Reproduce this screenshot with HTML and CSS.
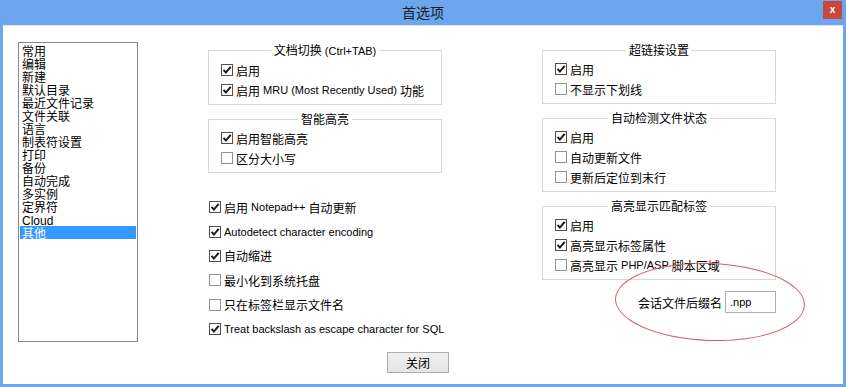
FILE: index.html
```html
<!DOCTYPE html>
<html lang="zh-CN">
<head>
    <meta charset="UTF-8">
    <meta name="viewport" content="width=device-width, initial-scale=1.0">
    <title>首选项</title>
    <link rel="stylesheet" href="styles.css">
</head>
<body>
    <div class="window">
        <div class="titlebar">
            <span></span>
            <span class="title">首选项</span>
            <button class="close" type="button">x</button>
        </div>

        <div class="content">
            <div class="main">
                <ul class="cat-list">
                    <li>常用</li>
                    <li>编辑</li>
                    <li>新建</li>
                    <li>默认目录</li>
                    <li>最近文件记录</li>
                    <li>文件关联</li>
                    <li>语言</li>
                    <li>制表符设置</li>
                    <li>打印</li>
                    <li>备份</li>
                    <li>自动完成</li>
                    <li>多实例</li>
                    <li>定界符</li>
                    <li><span class="en">Cloud</span></li>
                    <li class="selected">其他</li>
                </ul>

                <div class="column">
                    <div class="group">
                        <div class="group-title">文档切换<span class="en"> (Ctrl+TAB)</span></div>
                        <label class="check"><span class="box on"><svg viewBox="0 0 9 9"><path d="M1.4 4.4 3.5 6.8 7.8 1.6"/></svg></span>启用</label>
                        <label class="check"><span class="box on"><svg viewBox="0 0 9 9"><path d="M1.4 4.4 3.5 6.8 7.8 1.6"/></svg></span>启用<span class="en">&nbsp;MRU (Most Recently Used)&nbsp;</span>功能</label>
                    </div>
                    <div class="group">
                        <div class="group-title">智能高亮</div>
                        <label class="check"><span class="box on"><svg viewBox="0 0 9 9"><path d="M1.4 4.4 3.5 6.8 7.8 1.6"/></svg></span>启用智能高亮</label>
                        <label class="check"><span class="box"></span>区分大小写</label>
                    </div>

                    <div class="options">
                        <label class="check"><span class="box on"><svg viewBox="0 0 9 9"><path d="M1.4 4.4 3.5 6.8 7.8 1.6"/></svg></span>启用<span class="en">&nbsp;Notepad++&nbsp;</span>自动更新</label>
                        <label class="check"><span class="box on"><svg viewBox="0 0 9 9"><path d="M1.4 4.4 3.5 6.8 7.8 1.6"/></svg></span><span class="en">Autodetect character encoding</span></label>
                        <label class="check"><span class="box on"><svg viewBox="0 0 9 9"><path d="M1.4 4.4 3.5 6.8 7.8 1.6"/></svg></span>自动缩进</label>
                        <label class="check"><span class="box"></span>最小化到系统托盘</label>
                        <label class="check"><span class="box"></span>只在标签栏显示文件名</label>
                        <label class="check"><span class="box on"><svg viewBox="0 0 9 9"><path d="M1.4 4.4 3.5 6.8 7.8 1.6"/></svg></span><span class="en">Treat backslash as escape character for SQL</span></label>
                    </div>
                </div>

                <div class="column right">
                    <div class="group">
                        <div class="group-title">超链接设置</div>
                        <label class="check"><span class="box on"><svg viewBox="0 0 9 9"><path d="M1.4 4.4 3.5 6.8 7.8 1.6"/></svg></span>启用</label>
                        <label class="check"><span class="box"></span>不显示下划线</label>
                    </div>
                    <div class="group">
                        <div class="group-title">自动检测文件状态</div>
                        <label class="check"><span class="box on"><svg viewBox="0 0 9 9"><path d="M1.4 4.4 3.5 6.8 7.8 1.6"/></svg></span>启用</label>
                        <label class="check"><span class="box"></span>自动更新文件</label>
                        <label class="check"><span class="box"></span>更新后定位到末行</label>
                    </div>
                    <div class="group">
                        <div class="group-title">高亮显示匹配标签</div>
                        <label class="check"><span class="box on"><svg viewBox="0 0 9 9"><path d="M1.4 4.4 3.5 6.8 7.8 1.6"/></svg></span>启用</label>
                        <label class="check"><span class="box on"><svg viewBox="0 0 9 9"><path d="M1.4 4.4 3.5 6.8 7.8 1.6"/></svg></span>高亮显示标签属性</label>
                        <label class="check"><span class="box"></span>高亮显示<span class="en">&nbsp;PHP/ASP&nbsp;</span>脚本区域</label>
                    </div>

                    <div class="session">
                        <label for="ext">会话文件后缀名</label>
                        <input type="text" id="ext" value=".npp">
                        <span class="ellipse"></span>
                    </div>
                </div>
            </div>

            <div class="actions">
                <button class="btn" type="button">关闭</button>
            </div>
        </div>
    </div>
</body>
</html>
```

FILE: styles.css
```css
body {
    margin: 0;
    font-family: "Noto Sans CJK SC", sans-serif;
    font-size: 12px;
    color: #000;
}

/* latin runs are set a little smaller, like the dialog's UI font */
.en {
    font-family: "Liberation Sans", sans-serif;
    font-size: 11px;
}

.window {
    width: 846px;
    height: 387px;
    display: flex;
    flex-direction: column;
    background-color: #6ca6ef;
}

.titlebar {
    height: 25px;
    display: grid;
    grid-template-columns: 1fr auto 1fr;
}

.title {
    font-size: 14px;
    line-height: 25px;
    color: #1e1e1e;
}

.close {
    justify-self: end;
    align-self: start;
    width: 19px;
    height: 18px;
    margin: 1px 4px 0 0;
    padding: 0;
    border: none;
    background-color: #c9473b;
    color: #fff;
    font: bold 10px "Liberation Sans", sans-serif;
    line-height: 16px;
}

.content {
    flex: 1;
    margin: 0 3px 3px;
    background-color: #fff;
    border-top: 1px solid #dde6f1;
}

.main {
    display: flex;
    align-items: flex-start;
    padding: 16px 0 0 15px;
}

.cat-list {
    list-style: none;
    margin: 0;
    padding: 1px;
    width: 120px;
    height: 300px;
    box-sizing: border-box;
    border: 1px solid #828790;
}

.cat-list li {
    height: 13px;
    line-height: 13px;
    padding-left: 2px;
    white-space: nowrap;
}

.cat-list .en {
    font-size: 12px;
}

.cat-list .selected {
    background-color: #3399ff;
    color: #fff;
}

.column {
    width: 234px;
    margin-left: 70px;
    padding-top: 8px;
}

.column.right {
    margin-left: 100px;
}

.group {
    border: 1px solid #d9d9d9;
    padding: 8px 12px 4px;
}

.group + .group {
    margin-top: 14px;
}

.group-title {
    width: fit-content;
    margin: -16px auto 2px;
    padding: 0 3px;
    line-height: 14px;
    background-color: #fff;
}

.check {
    display: flex;
    align-items: center;
    height: 20px;
    white-space: nowrap;
}

.box {
    flex: none;
    width: 12px;
    height: 12px;
    box-sizing: border-box;
    margin-right: 3px;
    border: 1px solid #939393;
    background-color: #fff;
    display: flex;
    align-items: center;
    justify-content: center;
}

.box.on {
    border-color: #4f4f4f;
}

.box svg {
    width: 10px;
    height: 10px;
    fill: none;
    stroke: #1a1a1a;
    stroke-width: 1.8;
}

.options {
    margin-top: 22px;
    padding-left: 1px;
}

.options .check {
    height: 24.4px;
}

.session {
    position: relative;
    display: flex;
    justify-content: flex-end;
    align-items: center;
    margin-top: 11px;
}

.session input {
    width: 51px;
    height: 22px;
    box-sizing: border-box;
    margin: 0 0 0 3px;
    padding: 0 4px;
    border: 1px solid #abadb3;
    font: 11px "Liberation Sans", sans-serif;
}

/* red annotation ring drawn over the dialog */
.ellipse {
    position: absolute;
    left: 73px;
    top: -28px;
    width: 190px;
    height: 78px;
    box-sizing: border-box;
    border: 1px solid #d65a66;
    border-radius: 50%;
    transform: rotate(2deg);
    pointer-events: none;
}

.actions {
    display: flex;
    justify-content: center;
    padding-right: 10px;
    margin-top: 10px;
}

.btn {
    width: 62px;
    height: 21px;
    padding: 0;
    border: 1px solid #acacac;
    background: linear-gradient(#f0f0f0, #e5e5e5);
    font: 12px "Noto Sans CJK SC", sans-serif;
    color: #000;
}
```
